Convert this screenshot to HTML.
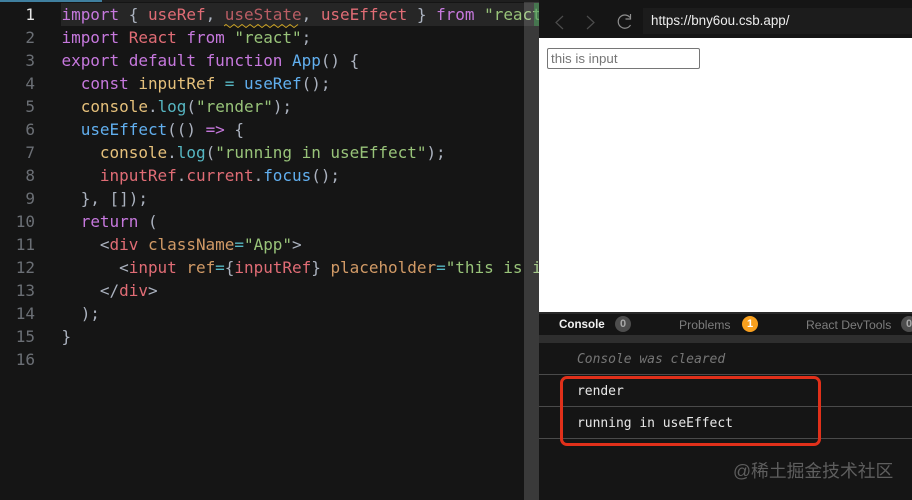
<!DOCTYPE html>
<html><head><meta charset="utf-8">
<style>
html,body{margin:0;padding:0;background:#151515;}
#r{position:relative;width:912px;height:500px;overflow:hidden;background:#151515;}
.a{position:absolute;}
#code{position:absolute;left:61.5px;top:3px;width:477.5px;overflow:hidden;font:16px/23px "DejaVu Sans Mono","Liberation Mono",monospace;letter-spacing:-.03px;color:#abb2bf;white-space:pre;filter:blur(.3px);}
#nums{position:absolute;left:0;top:3px;width:35px;text-align:right;font:16px/23px "DejaVu Sans Mono","Liberation Mono",monospace;color:#6b6f75;white-space:pre;filter:blur(.3px);}
.p{color:#c678dd}.r{color:#e06c75}.g{color:#98c379}.b{color:#61afef}.o{color:#d19a66}.y{color:#e5c07b}.c{color:#56b6c2}
.tab{position:absolute;top:318px;font:11.6px/14px "Liberation Sans",sans-serif;color:#7d7d7d;white-space:pre;}
.badge{position:absolute;top:316px;width:16px;height:16px;border-radius:50%;background:#4d4d4d;color:#a8a8a8;font:bold 11px/16px "Liberation Sans",sans-serif;text-align:center;}
.ln{position:absolute;left:539px;width:373px;height:1px;background:#4a4a4a;}
.con{position:absolute;left:577px;font:13px/16px "DejaVu Sans Mono","Liberation Mono",monospace;letter-spacing:-.03px;color:#e8e8e8;white-space:pre;}
</style></head><body>
<div id="r">
<div class="a" style="left:0;top:0;width:539px;height:2px;background:#1f1f1f"></div>
<div class="a" style="left:0;top:0;width:102px;height:2px;background:#3f7f9f"></div>
<div class="a" style="left:61px;top:3px;width:478px;height:23px;background:#262626"></div>
<div id="nums"><span style="color:#e6e6e6">1</span>
2
3
4
5
6
7
8
9
10
11
12
13
14
15
16</div>
<div id="code"><span class="p">import</span> { <span class="r">useRef</span>, <span class="r" style="opacity:.8">useState</span>, <span class="r">useEffect</span> } <span class="p">from</span> <span class="g">"react"</span>;
<span class="p">import</span> <span class="r">React</span> <span class="p">from</span> <span class="g">"react"</span>;
<span class="p">export</span> <span class="p">default</span> <span class="p">function</span> <span class="b">App</span>() {
  <span class="p">const</span> <span class="y">inputRef</span> <span class="c">=</span> <span class="b">useRef</span>();
  <span class="y">console</span>.<span class="c">log</span>(<span class="g">"render"</span>);
  <span class="b">useEffect</span>(() <span class="p">=&gt;</span> {
    <span class="y">console</span>.<span class="c">log</span>(<span class="g">"running in useEffect"</span>);
    <span class="r">inputRef</span>.<span class="r">current</span>.<span class="b">focus</span>();
  }, []);
  <span class="p">return</span> (
    &lt;<span class="r">div</span> <span class="o">className</span><span class="c">=</span><span class="g">"App"</span>&gt;
      &lt;<span class="r">input</span> <span class="o">ref</span><span class="c">=</span>{<span class="r">inputRef</span>} <span class="o">placeholder</span><span class="c">=</span><span class="g">"this is input"</span> /&gt;
    &lt;/<span class="r">div</span>&gt;
  );
}</div>
<svg class="a" style="left:224px;top:24px" width="78" height="4"><path d="M0 2 l2 -1.5 2 1.5 2 1.5 2 -1.5 2 -1.5 2 1.5 2 1.5 2 -1.5 2 -1.5 2 1.5 2 1.5 2 -1.5 2 -1.5 2 1.5 2 1.5 2 -1.5 2 -1.5 2 1.5 2 1.5 2 -1.5 2 -1.5 2 1.5 2 1.5 2 -1.5 2 -1.5 2 1.5 2 1.5 2 -1.5 2 -1.5 2 1.5 2 1.5 2 -1.5 2 -1.5 2 1.5 2 1.5 2 -1.5 2 -1.5" fill="none" stroke="#c9a227" stroke-width="1"/></svg>

<div class="a" style="left:524px;top:2px;width:15px;height:498px;background:rgba(255,255,255,.16)"></div>
<div class="a" style="left:534px;top:3px;width:5px;height:23px;background:rgba(70,150,85,.6)"></div>

<div class="a" style="left:539px;top:0;width:373px;height:38px;background:#151515"></div>
<div class="a" style="left:643px;top:8px;width:269px;height:26px;background:#1c1c1c"></div>
<svg class="a" style="left:539px;top:8px" width="100" height="28" fill="none" stroke-width="1.2">
<path d="M24 8 L17 14.5 L24 21" stroke="#4c4c4c"/>
<path d="M48 8 L55 14.5 L48 21" stroke="#4c4c4c"/>
<path d="M91 9.5 A6.6 6.6 0 1 0 91.5 17" stroke="#8e8e8e"/>
<path d="M91.5 6 V11 H86.5" stroke="#8e8e8e"/>
</svg>
<div class="a" style="left:651px;top:12px;font:13.4px/17px 'Liberation Sans',sans-serif;color:#ececec;white-space:pre">https://bny6ou.csb.app/</div>

<div class="a" style="left:539px;top:38px;width:373px;height:274px;background:#fff"></div>
<div class="a" style="left:547px;top:48px;width:151px;height:19px;border:1px solid #767676;border-radius:2px;background:#fff;font:13.3px/19px 'Liberation Sans',sans-serif;color:#757575;text-indent:3px;white-space:pre">this is input</div>

<div class="a" style="left:539px;top:312px;width:373px;height:2px;background:#2a2a2a"></div>
<div class="tab" style="left:559px;color:#f2f2f2;font-weight:bold">Console</div>
<div class="badge" style="left:615px">0</div>
<div class="tab" style="left:679px;font-size:12.2px">Problems</div>
<div class="badge" style="left:742px;background:#f9a01e;color:#fff">1</div>
<div class="tab" style="left:806px;font-size:12.2px">React DevTools</div>
<div class="badge" style="left:901px">0</div>
<div class="a" style="left:539px;top:335px;width:373px;height:8px;background:#2e2e2e"></div>

<div class="con" style="top:352px;color:#767676;font-style:italic">Console was cleared</div>
<div class="ln" style="top:374px"></div>
<div class="con" style="top:384px">render</div>
<div class="ln" style="top:406px"></div>
<div class="con" style="top:416px">running in useEffect</div>
<div class="ln" style="top:438px"></div>

<div class="a" style="left:560px;top:376px;width:255px;height:64px;border:3px solid #e0301a;border-radius:7px"></div>

<div class="a" style="left:733px;top:461px;font:17.8px/20px 'Liberation Sans','Noto Sans CJK SC',sans-serif;color:#5e5e5e;white-space:pre">@稀土掘金技术社区</div>
</div>
</body></html>
